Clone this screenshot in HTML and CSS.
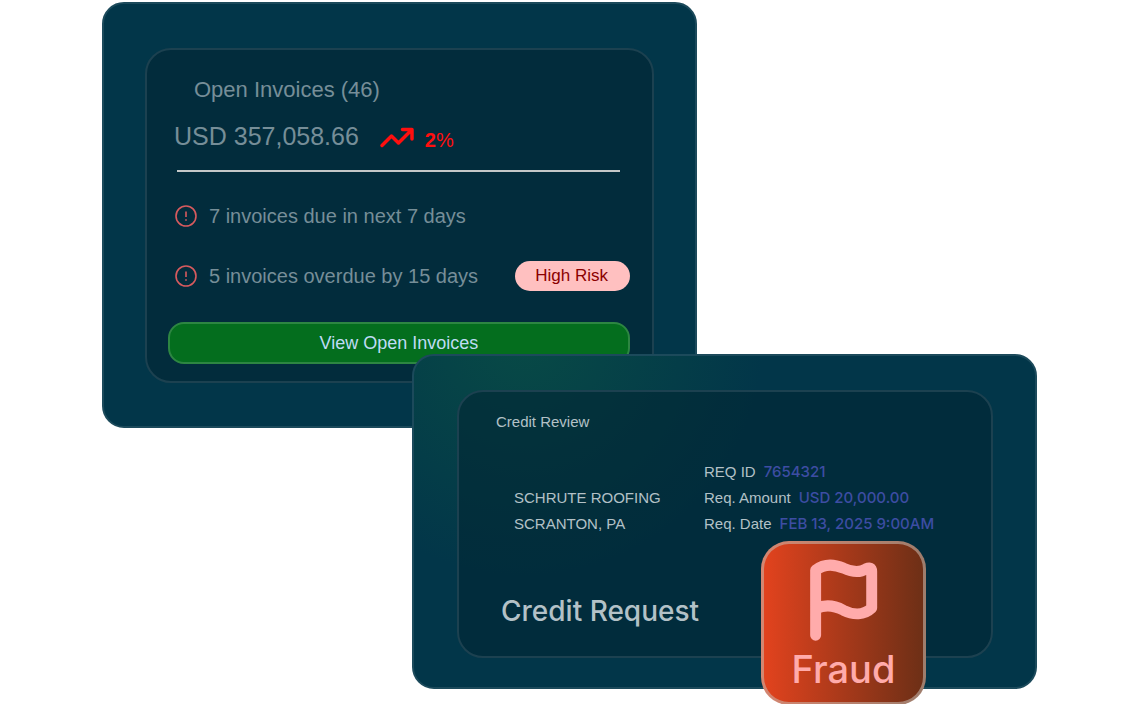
FILE: index.html
```
<!DOCTYPE html>
<html lang="en">
<head>
    <meta charset="UTF-8">
    <meta name="viewport" content="width=device-width, initial-scale=1.0">
    <title>Open Invoices and Credit Review</title>
    <link rel="stylesheet" href="styles.css">
</head>
<body>
    <main class="board">
        <!-- Open invoices -->
        <section class="card invoices">
            <div class="panel invoices-panel">
                <h2 class="invoices-title">Open Invoices (46)</h2>
                <div class="total">
                    <span class="amount">USD 357,058.66</span>
                    <svg class="trend-icon" viewBox="0 0 36 22" aria-hidden="true">
                        <path d="M3 18.500L12.500 9L19.500 16L32 3.500M23.500 2.500H33V12"/>
                    </svg>
                    <span class="trend"><b>2</b>%</span>
                </div>
                <hr class="divider">
                <ul class="alerts">
                    <li>
                        <svg class="alert-icon" viewBox="0 0 22 22" aria-hidden="true">
                            <circle cx="11" cy="11" r="10"/>
                            <path d="M11 6.500V12M11 14.200V15.800"/>
                        </svg>
                        <span>7 invoices due in next 7 days</span>
                    </li>
                    <li>
                        <svg class="alert-icon" viewBox="0 0 22 22" aria-hidden="true">
                            <circle cx="11" cy="11" r="10"/>
                            <path d="M11 6.500V12M11 14.200V15.800"/>
                        </svg>
                        <span>5 invoices overdue by 15 days</span>
                        <span class="risk">High Risk</span>
                    </li>
                </ul>
                <button type="button" class="view-button">View Open Invoices</button>
            </div>
        </section>

        <!-- Credit review -->
        <section class="card credit">
            <div class="panel credit-panel">
                <h2 class="credit-title">Credit Review</h2>
                <div class="request">
                    <address class="customer">
                        SCHRUTE ROOFING<br>
                        SCRANTON, PA
                    </address>
                    <dl class="details">
                        <div><dt>REQ ID</dt><dd>7654321</dd></div>
                        <div><dt>Req. Amount</dt><dd>USD 20,000.00</dd></div>
                        <div><dt>Req. Date</dt><dd>FEB 13, 2025 9:00AM</dd></div>
                    </dl>
                </div>
                <p class="request-type">Credit Request</p>
            </div>
            <div class="fraud">
                <svg class="flag-icon" viewBox="0 0 208 252" aria-hidden="true">
                    <path d="M20 232V36C46 16 76 18 104 30C132 43 152 45 172 32Q189 24 189 40V150C166 172 134 172 104 157C76 142 46 140 22 152"/>
                </svg>
                <span>Fraud</span>
            </div>
        </section>
    </main>
</body>
</html>
```
FILE: styles.css
```
* {
    box-sizing: border-box;
}

body {
    margin: 0;
    background-color: #ffffff;
    font-family: "Liberation Sans", Arial, sans-serif;
    color: #b3c1c7;
}

h2, p, ul, dl, dd {
    margin: 0;
    padding: 0;
    font-weight: 400;
}

/* the two cards share the middle column */
.board {
    display: grid;
    grid-template-columns: 310fr 285fr 340fr;
    padding: 2px 87px 15px 102px;
}

.card {
    border: 2px solid #1c4a5b;
    border-radius: 22px;
    background-color: #023649;
}

.panel {
    border: 2px solid #1c4150;
    border-radius: 26px;
    background-color: #022c3c;
}

/* Open invoices */
.invoices {
    grid-column: 1 / 3;
    padding: 44px 41px 43px;
}

.invoices-panel {
    padding: 25px 22px 17px 21px;
    color: #768e98;
}

.invoices-title {
    padding-left: 26px;
    font-size: 22px;
    line-height: 30px;
}

.total {
    display: flex;
    align-items: center;
    padding: 12px 0 0 6px;
    line-height: 38px;
}

.amount {
    font-size: 25px;
}

.trend-icon {
    width: 36px;
    height: 22px;
    margin: 4px 10px 0 20px;
    fill: none;
    stroke: #ff0f0f;
    stroke-width: 3.5;
    stroke-linecap: round;
    stroke-linejoin: round;
}

.trend {
    padding-top: 8px;
    font-size: 20px;
    line-height: 30px;
    color: #ff0f0f;
}

.divider {
    margin: 15px 10px 29px 9px;
    border: 0;
    border-top: 2px solid #c4c8c8;
}

.alerts {
    display: grid;
    gap: 30px;
    padding-left: 7px;
    list-style: none;
    font-size: 20px;
    line-height: 30px;
}

.alerts li {
    display: flex;
    align-items: center;
    gap: 12px;
}

.alert-icon {
    width: 22px;
    height: 22px;
    fill: none;
    stroke: #d65a5e;
    stroke-width: 1.6;
}

.risk {
    margin-left: auto;
    padding: 0 22px 0 20px;
    border-radius: 15px;
    background-color: #ffc0c0;
    font-size: 17px;
    color: #8b0000;
}

.view-button {
    display: block;
    width: 100%;
    height: 42px;
    margin-top: 31px;
    border: 2px solid #2d8642;
    border-radius: 16px;
    background-color: #046e1e;
    font: inherit;
    font-size: 18px;
    color: #bfdcf5;
    cursor: pointer;
}

/* Credit review */
.credit {
    position: relative;
    grid-column: 2 / 4;
    margin-top: -74px;
    padding: 34px 42px 29px 43px;
    background-image: radial-gradient(circle at 110px -20px, #084a46, rgba(0, 55, 76, 0) 240px);
}

.credit-panel {
    padding: 20px 37px 25px;
    background-color: rgba(2, 38, 52, 0.6);
}

.credit-title {
    font-size: 15px;
    line-height: 20px;
}

.request {
    display: grid;
    grid-template-columns: 190px 1fr;
    align-items: end;
    margin: 27px 0 54px;
    padding-left: 18px;
    font-size: 15px;
    line-height: 26px;
}

.customer {
    font-style: normal;
}

.details div {
    display: flex;
    gap: 8px;
}

.details dd {
    font-family: Inter, "Liberation Sans", sans-serif;
    font-size: 15px;
    font-weight: 500;
    color: #3d4da3;
}

.request-type {
    padding-left: 5px;
    font-family: Inter, "Liberation Sans", sans-serif;
    font-size: 28px;
    font-weight: 500;
    line-height: 40px;
}

.fraud {
    position: absolute;
    right: 109px;
    bottom: -18px;
    display: flex;
    flex-direction: column;
    align-items: center;
    width: 165px;
    height: 164px;
    padding-top: 14px;
    border: 3px solid rgba(200, 190, 180, 0.55);
    border-radius: 28px;
    background: linear-gradient(90deg, #e4431e, #6b2f16) border-box;
    font-family: Inter, "Liberation Sans", sans-serif;
    font-size: 38px;
    font-weight: 500;
    line-height: 48px;
    color: #ffabab;
}

.flag-icon {
    width: 69px;
    height: 84px;
    margin-bottom: 3px;
    fill: none;
    stroke: #ffabab;
    stroke-width: 33;
    stroke-linecap: round;
    stroke-linejoin: round;
}
```
